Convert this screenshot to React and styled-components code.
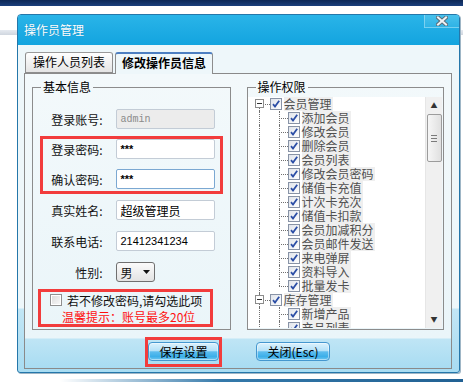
import React from 'react';
import styled, { createGlobalStyle } from 'styled-components';

const GlobalStyle = createGlobalStyle`
  html, body {
    margin: 0;
    padding: 0;
  }
  body {
    width: 463px;
    height: 384px;
    overflow: hidden;
    font-family: "Noto Sans CJK SC", "Liberation Sans", sans-serif;
    font-size: 12px;
    color: #111;
    background:
      linear-gradient(#0d2755, #1b3f7c) 0 0 / 100% 6px no-repeat,
      linear-gradient(#e6eaf0, #cfd6df) 0 30px / 100% 5px no-repeat,
      linear-gradient(90deg, #ffffff 0%, #3479aa 35%, #1d5b8d 100%) 60px 379px / 100% 3px no-repeat,
      #ffffff;
  }
`;

// Dialog window
const Window = styled.div`
  margin: 14px 0 0 17px;
  width: 443px;
  height: 359px;
  box-sizing: border-box;
  border: 1px solid #2577aa;
  border-radius: 4px 4px 3px 3px;
  overflow: hidden;
  display: flex;
  flex-direction: column;
  background: linear-gradient(
    to bottom,
    #9fdaf2 0px,
    #d6eff9 9px,
    #eef7fa 18px,
    #eef7fa 293px,
    #c2e6f5 294px,
    #a8dcf2 100%
  );
  box-shadow: 1px 1px 0 #9fb6c6;
`;

const TitleBar = styled.div`
  height: 30px;
  flex: none;
  display: flex;
  align-items: flex-start;
  justify-content: space-between;
  background: linear-gradient(#2ab4e8, #13a4df);
`;

const Title = styled.span`
  padding: 8px 0 0 6px;
  color: #fff;
  font-size: 12px;
  line-height: 14px;
  text-shadow: 0 0 1px rgba(0, 60, 110, 0.35);
`;

const CloseButton = styled.button`
  width: 35px;
  height: 13px;
  padding: 0;
  border: none;
  border-left: 1px solid rgba(255, 255, 255, 0.35);
  border-bottom: 1px solid rgba(255, 255, 255, 0.25);
  background: linear-gradient(#48c1ec, #2fb3e6);
  display: flex;
  align-items: center;
  justify-content: center;
`;

const Body = styled.div`
  flex: 1;
  display: flex;
  flex-direction: column;
  padding: 7px 7px 3px 6px;
`;

// Tabs
const TabStrip = styled.div`
  display: flex;
  align-items: flex-end;
  padding-left: 1px;
  gap: 2px;
  position: relative;
  z-index: 1;
`;

const Tab = styled.div`
  height: 21px;
  box-sizing: border-box;
  padding: 0 ${(p) => (p.$active ? 6 : 7)}px;
  margin-bottom: ${(p) => (p.$active ? '-1px' : '0')};
  height: ${(p) => (p.$active ? 22 : 21)}px;
  border: 1px solid #8d8d8d;
  border-bottom: ${(p) => (p.$active ? 'none' : '1px solid #8d8d8d')};
  border-top: ${(p) => (p.$active ? '2px solid #4d7fc1' : '1px solid #9a9a9a')};
  border-radius: 3px 3px 0 0;
  background: ${(p) =>
    p.$active ? '#eef7fa' : 'linear-gradient(#ffffff, #e4e4e4)'};
  font-size: 12px;
  font-weight: ${(p) => (p.$active ? 700 : 400)};
  line-height: 18px;
  color: #000;
  white-space: nowrap;
`;

const Panel = styled.div`
  flex: 1;
  border: 1px solid #8a8a8a;
  background: linear-gradient(
    to bottom,
    #f3f9fb 0px,
    #eaf5f9 264px,
    #bfe5f5 265px,
    #a8dcf2 100%
  );
  display: flex;
  flex-direction: column;
`;

const Columns = styled.div`
  display: flex;
  gap: 16px;
  padding: 6px 7px 0 7px;
`;

const Group = styled.fieldset`
  margin: 0;
  padding: 0;
  width: ${(p) => p.$w}px;
  height: 250px;
  box-sizing: border-box;
  border: 1px solid #8c8c8c;
  min-width: 0;
  display: flex;
  flex-direction: column;
`;

const Legend = styled.legend`
  margin-left: 8px;
  padding: 0 2px;
  font-size: 12px;
  line-height: 14px;
  color: #000;
`;

// Left form
const Form = styled.div`
  display: flex;
  flex-direction: column;
  padding-top: 15px;
`;

const Row = styled.div`
  display: flex;
  align-items: center;
  height: 20px;
  padding-right: 15px;
  margin-top: ${(p) => p.$mt || 0}px;
`;

const Label = styled.label`
  flex: 1;
  text-align: right;
  margin-right: 13px;
  font-size: 12px;
  color: #111;
  white-space: nowrap;
`;

const Input = styled.div`
  width: 99px;
  height: 20px;
  box-sizing: border-box;
  border: 1px solid ${(p) => (p.$focus ? '#7ba8d2' : '#c3ccd6')};
  border-radius: 2px;
  background: ${(p) => (p.$disabled ? '#ececec' : '#fff')};
  padding: 0 4px;
  display: flex;
  align-items: center;
  font-family: ${(p) =>
    p.$mono
      ? '"Liberation Mono", monospace'
      : p.$latin
      ? '"Liberation Sans", sans-serif'
      : '"Noto Sans CJK SC", "Liberation Sans", sans-serif'};
  font-size: ${(p) => (p.$mono ? 10 : p.$latin ? 11 : 12)}px;
  font-weight: ${(p) => (p.$bold ? 700 : 400)};
  color: ${(p) => (p.$disabled ? '#8a8a8a' : '#000')};
  white-space: nowrap;
`;

const Select = styled.div`
  width: 39px;
  height: 20px;
  box-sizing: border-box;
  margin-right: 60px;
  border: 1px solid #707070;
  border-radius: 3px;
  background: linear-gradient(#fbfbfb, #e3e3e3);
  display: flex;
  align-items: center;
  justify-content: space-between;
  padding: 0 4px 0 4px;
  font-size: 12px;
`;

const Highlight = styled.div`
  border: 3px solid #f23c3c;
  margin: ${(p) => p.$m};
  padding: ${(p) => p.$p};
  display: flex;
  flex-direction: column;
  gap: ${(p) => p.$gap || 0}px;

  ${Row} {
    padding-right: 5px;
  }
`;

const NoteLine = styled.div`
  display: flex;
  align-items: center;
  height: 16px;
  padding-left: ${(p) => p.$pl}px;
  font-size: 12px;
  color: ${(p) => (p.$warn ? '#ff1010' : '#111')};
  white-space: nowrap;
`;

const CheckBox = styled.span`
  width: 12px;
  height: 12px;
  box-sizing: border-box;
  margin-right: 5px;
  border: 1px solid #8f8f8f;
  background: linear-gradient(135deg, #d9d9d9, #fafafa);
  box-shadow: inset 0 0 0 1px #fff;
`;

// Permission tree
const TreeBox = styled.div`
  margin: 3px 1px 1px 0;
  flex: 1;
  display: flex;
  background: #fff;
  overflow: hidden;
`;

const TreeList = styled.div`
  flex: 1;
  padding-top: 0;
  overflow: hidden;
`;

const TreeRow = styled.div`
  display: flex;
  align-items: center;
  height: 14px;
`;

const Guide = styled.span`
  position: relative;
  flex: none;
  width: ${(p) => p.$w}px;
  height: 14px;

  &::before {
    content: '';
    display: ${(p) => (p.$v === 'none' ? 'none' : 'block')};
    position: absolute;
    left: ${(p) => p.$x}px;
    top: ${(p) => (p.$v === 'bottom' ? 7 : 0)}px;
    bottom: ${(p) => (p.$v === 'top' ? 7 : 0)}px;
    border-left: 1px dotted #6f6f6f;
  }

  &::after {
    content: '';
    display: ${(p) => (p.$h ? 'block' : 'none')};
    position: absolute;
    left: ${(p) => p.$x}px;
    right: 0;
    top: 7px;
    border-top: 1px dotted #6f6f6f;
  }
`;

const Expander = styled.span`
  position: absolute;
  left: 7px;
  top: 2px;
  width: 9px;
  height: 9px;
  box-sizing: border-box;
  border: 1px solid #8c8c8c;
  background: #fff;
  z-index: 1;

  &::after {
    content: '';
    position: absolute;
    left: 1px;
    right: 1px;
    top: 3px;
    border-top: 1px solid #333;
  }
`;

const TreeCheck = styled.svg`
  flex: none;
  width: 12px;
  height: 12px;
  margin-right: 2px;
`;

const NodeText = styled.span`
  font-size: 12px;
  line-height: 14px;
  color: #505050;
  background: #efefef;
  padding: 0 1px 0 0;
  white-space: nowrap;
`;

const ScrollBar = styled.div`
  width: 16px;
  flex: none;
  background: #f0f0f0;
  border-left: 1px solid #e6e6e6;
  display: flex;
  flex-direction: column;
  align-items: center;
`;

const ScrollArrow = styled.div`
  height: 17px;
  flex: none;
  display: flex;
  align-items: center;
  justify-content: center;
  font-size: 7px;
  color: #333;
  line-height: 1;
`;

const Thumb = styled.div`
  width: 15px;
  height: 48px;
  box-sizing: border-box;
  border: 1px solid #9c9c9c;
  border-radius: 2px;
  background: linear-gradient(90deg, #f6f6f6, #e0e0e0);
  display: flex;
  flex-direction: column;
  align-items: center;
  justify-content: center;
  gap: 2px;

  span {
    width: 6px;
    border-top: 1px solid #7a7a7a;
  }
`;

const Track = styled.div`
  flex: 1;
`;

// Bottom buttons
const Actions = styled.div`
  display: flex;
  align-items: flex-start;
  gap: 34px;
  padding-left: 120px;
  margin-top: 7px;
`;

const Button = styled.button`
  width: ${(p) => p.$w}px;
  height: 19px;
  padding: 0;
  margin-top: ${(p) => p.$mt || 0}px;
  border: 1px solid #4597cf;
  border-radius: 4px;
  background: linear-gradient(
    #dcf2fd 0%,
    #b4e1f8 45%,
    #5dbdef 52%,
    #3cafe9 80%,
    #73c8f1 100%
  );
  box-shadow: inset 0 0 0 1px rgba(255, 255, 255, 0.45);
  font-family: "Noto Sans CJK SC", "Liberation Sans", sans-serif;
  font-size: 12px;
  line-height: 17px;
  color: #000;
`;

const CheckMark = () => (
  <TreeCheck viewBox="0 0 12 12">
    <defs>
      <linearGradient id="cbg" x1="0" y1="0" x2="1" y2="1">
        <stop offset="0" stopColor="#dfe3ea" />
        <stop offset="1" stopColor="#ffffff" />
      </linearGradient>
    </defs>
    <rect x="0.5" y="0.5" width="11" height="11" fill="url(#cbg)" stroke="#8893a6" />
    <path d="M3 6.2 L5 8.6 L9.2 2.8" fill="none" stroke="#2d4fa6" strokeWidth="1.8" />
  </TreeCheck>
);

const tree = [
  {
    name: '会员管理',
    children: [
      '添加会员',
      '修改会员',
      '删除会员',
      '会员列表',
      '修改会员密码',
      '储值卡充值',
      '计次卡充次',
      '储值卡扣款',
      '会员加减积分',
      '会员邮件发送',
      '来电弹屏',
      '资料导入',
      '批量发卡',
    ],
  },
  {
    name: '库存管理',
    children: ['新增产品', '产品列表', '产品入库', '库存查询'],
  },
];

const PermissionTree = () => (
  <TreeList>
    {tree.map((group, gi) => (
      <React.Fragment key={group.name}>
        <TreeRow>
          <Guide $w={22} $x={11} $v={gi === 0 ? 'bottom' : 'full'} $h>
            <Expander />
          </Guide>
          <CheckMark />
          <NodeText>{group.name}</NodeText>
        </TreeRow>
        {group.children.map((child, ci) => (
          <TreeRow key={child}>
            <Guide $w={22} $x={11} $v="full" />
            <Guide
              $w={18}
              $x={9}
              $v={ci === group.children.length - 1 ? 'top' : 'full'}
              $h
            />
            <CheckMark />
            <NodeText>{child}</NodeText>
          </TreeRow>
        ))}
      </React.Fragment>
    ))}
  </TreeList>
);

const App = () => (
  <>
    <GlobalStyle />
    <Window>
      <TitleBar>
        <Title>操作员管理</Title>
        <CloseButton aria-label="关闭">
          <svg width="12" height="10" viewBox="0 0 12 10">
            <path d="M2 1.5 L10 8.5 M10 1.5 L2 8.5" stroke="#5b6f7c" strokeWidth="4" strokeLinecap="square" />
            <path d="M2 1.5 L10 8.5 M10 1.5 L2 8.5" stroke="#eef3f6" strokeWidth="2" strokeLinecap="square" />
          </svg>
        </CloseButton>
      </TitleBar>
      <Body>
        <TabStrip>
          <Tab>操作人员列表</Tab>
          <Tab $active>修改操作员信息</Tab>
        </TabStrip>
        <Panel>
          <Columns>
            <Group $w={199}>
              <Legend>基本信息</Legend>
              <Form>
                <Row>
                  <Label>登录账号:</Label>
                  <Input $disabled $mono>admin</Input>
                </Row>
                <Highlight $m="7px 7px 0 7px" $p="0 0 2px 0" $gap={10}>
                  <Row>
                    <Label>登录密码:</Label>
                    <Input $bold $latin>***</Input>
                  </Row>
                  <Row>
                    <Label>确认密码:</Label>
                    <Input $bold $latin $focus>***</Input>
                  </Row>
                </Highlight>
                <Row $mt={6}>
                  <Label>真实姓名:</Label>
                  <Input>超级管理员</Input>
                </Row>
                <Row $mt={11}>
                  <Label>联系电话:</Label>
                  <Input $latin>21412341234</Input>
                </Row>
                <Row $mt={11}>
                  <Label>性别:</Label>
                  <Select>
                    <span>男</span>
                    <svg width="7" height="4" viewBox="0 0 7 4">
                      <path d="M0 0 H7 L3.5 4 Z" fill="#111" />
                    </svg>
                  </Select>
                </Row>
                <Highlight $m="7px 17px 0 5px" $p="0">
                  <NoteLine $pl={9}>
                    <CheckBox />
                    若不修改密码,请勾选此项
                  </NoteLine>
                  <NoteLine $pl={21} $warn>
                    温馨提示：账号最多20位
                  </NoteLine>
                </Highlight>
              </Form>
            </Group>
            <Group $w={198}>
              <Legend>操作权限</Legend>
              <TreeBox>
                <PermissionTree />
                <ScrollBar>
                  <ScrollArrow>▲</ScrollArrow>
                  <Thumb>
                    <span />
                    <span />
                    <span />
                  </Thumb>
                  <Track />
                  <ScrollArrow>▼</ScrollArrow>
                </ScrollBar>
              </TreeBox>
            </Group>
          </Columns>
          <Actions>
            <Highlight $m="0" $p="2px 0 3px 0">
              <Button $w={71}>保存设置</Button>
            </Highlight>
            <Button $w={74} $mt={5}>关闭(Esc)</Button>
          </Actions>
        </Panel>
      </Body>
    </Window>
  </>
);

export default App;
